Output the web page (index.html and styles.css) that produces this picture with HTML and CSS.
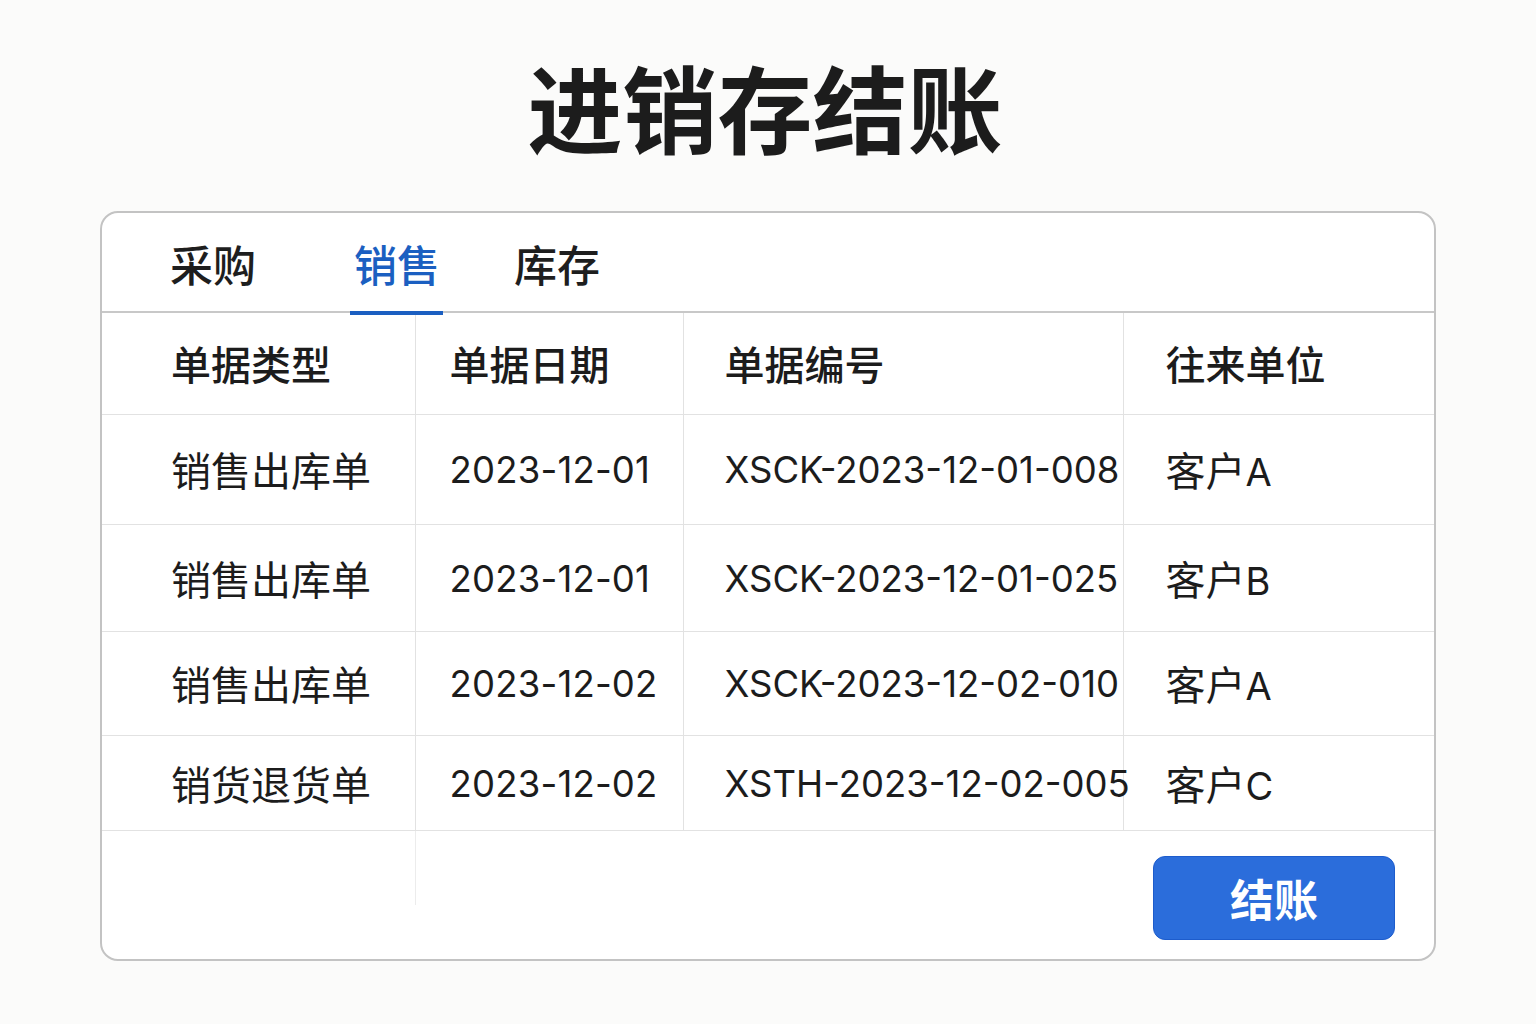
FILE: index.html
```html
<!DOCTYPE html>
<html lang="zh-CN">
<head>
<meta charset="utf-8">
<title>进销存结账</title>
<link rel="stylesheet" href="styles.css">
</head>
<body>
<h1 class="title">进销存结账</h1>
<div class="card">
  <div class="tabs">
    <div class="tab t1">采购</div>
    <div class="tab t2 active">销售</div>
    <div class="tab t3">库存</div>
  </div>
  <table class="grid">
    <thead>
      <tr class="rh">
        <th class="c1">单据类型</th>
        <th class="c2">单据日期</th>
        <th class="c3">单据编号</th>
        <th class="c4">往来单位</th>
      </tr>
    </thead>
    <tbody>
      <tr class="r1">
        <td class="c1">销售出库单</td>
        <td class="c2">2023-12-01</td>
        <td class="c3">XSCK-2023-12-01-008</td>
        <td class="c4">客户<span class="lt">A</span></td>
      </tr>
      <tr class="r2">
        <td class="c1">销售出库单</td>
        <td class="c2">2023-12-01</td>
        <td class="c3">XSCK-2023-12-01-025</td>
        <td class="c4">客户<span class="lt">B</span></td>
      </tr>
      <tr class="r3">
        <td class="c1">销售出库单</td>
        <td class="c2">2023-12-02</td>
        <td class="c3">XSCK-2023-12-02-010</td>
        <td class="c4">客户<span class="lt">A</span></td>
      </tr>
      <tr class="r4">
        <td class="c1">销货退货单</td>
        <td class="c2">2023-12-02</td>
        <td class="c3">XSTH-2023-12-02-005</td>
        <td class="c4">客户<span class="lt">C</span></td>
      </tr>
    </tbody>
  </table>
  <div class="footer">
    <div class="stub"></div>
    <button class="btn">结账</button>
  </div>
</div>
</body>
</html>
```

FILE: styles.css
```css
html, body {
  margin: 0;
  padding: 0;
  background: #fbfbfa;
  font-family: "Noto Sans CJK SC", "Noto Sans", sans-serif;
  color: #1c1c1c;
}
.title {
  margin: 0;
  padding: 46px 6px 0 0;
  height: 158px;
  box-sizing: border-box;
  text-align: center;
  font-size: 95px;
  line-height: 120px;
  font-weight: 700;
  color: #1c1c1c;
}
.card {
  margin: 53px 0 0 100px;
  width: 1336px;
  height: 750px;
  box-sizing: border-box;
  border: 2px solid #c3c3c3;
  border-radius: 18px;
  background: #ffffff;
  overflow: hidden;
}
.tabs {
  display: flex;
  height: 100px;
  box-sizing: border-box;
  border-bottom: 2px solid #c8c8c8;
  padding-left: 68px;
}
.tab {
  font-size: 43px;
  line-height: 100px;
  height: 100px;
  box-sizing: border-box;
  color: #1e1e1e;
  font-weight: 500;
}
.t1 { width: 182px; }
.t2 { width: 162px; padding-left: 2px; }
.tab.active {
  color: #1b5fc1;
  position: relative;
}
.tab.active::after {
  content: "";
  position: absolute;
  left: -2px;
  bottom: -2px;
  width: 93px;
  height: 4px;
  background: #1b5fc1;
}
.grid {
  border-collapse: collapse;
  width: 1332px;
  table-layout: fixed;
}
.grid th, .grid td {
  box-sizing: border-box;
  text-align: left;
  font-size: 40px;
  font-weight: 400;
  border-bottom: 1.5px solid #e2e2e2;
  border-right: 1.5px solid #e2e2e2;
  white-space: nowrap;
  color: #1c1c1c;
}
.grid td.c2, .grid td.c3 {
  font-family: "Inter", "Noto Sans CJK SC", sans-serif;
  font-size: 36.5px;
  padding-top: 3px;
}
.grid td.c2 { letter-spacing: 0.2px; }
.lt {
  font-family: "Inter", sans-serif;
  font-size: 38px;
}
.grid th { font-weight: 500; }
.grid .c4 { border-right: none; }
.grid .c1 { width: 313px; padding-left: 69px; }
.grid .c2 { width: 268px; padding-left: 34px; }
.grid .c3 { width: 440px; padding-left: 41px; }
.grid .c4 { padding-left: 42px; }
.rh { height: 101px; }
.r1 { height: 110px; }
.r2 { height: 107px; }
.r3 { height: 104px; }
.r4 { height: 95px; }
.footer {
  display: flex;
  align-items: flex-start;
  justify-content: space-between;
  padding-right: 39px;
}
.stub {
  width: 313px;
  height: 74px;
  border-right: 1.5px solid #ececec;
}
.btn {
  margin-top: 25px;
  width: 242px;
  height: 84px;
  border: 1px solid #1d5ccc;
  border-radius: 12px;
  background: #2b6ddb;
  color: #ffffff;
  font-family: "Noto Sans CJK SC", sans-serif;
  font-size: 44px;
  font-weight: 700;
  line-height: 1;
  padding: 0;
}
```
